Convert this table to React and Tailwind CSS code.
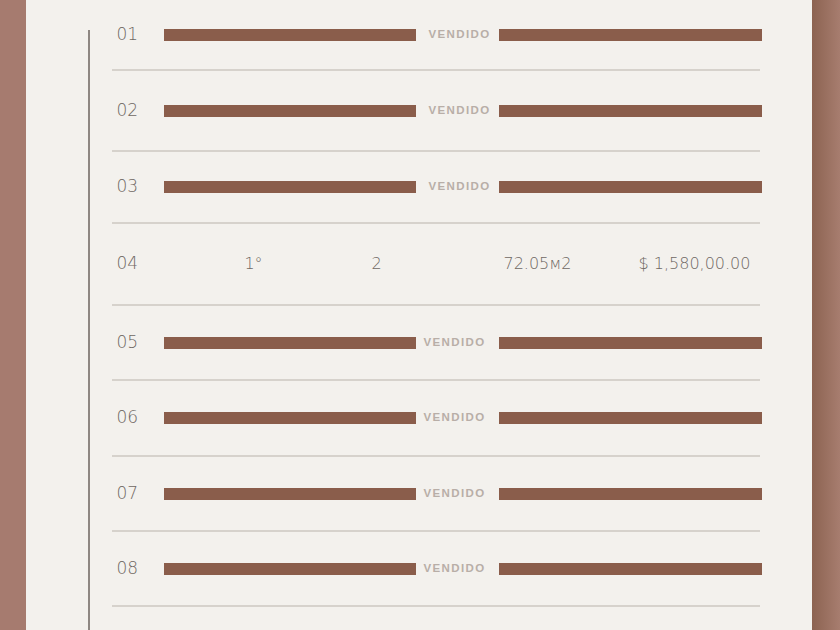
const rows = [
  { n: '01', h: 69, sold: true, shift: 'pl-[5px]' },
  { n: '02', h: 79, sold: true, shift: 'pl-[5px]' },
  { n: '03', h: 70, sold: true, shift: 'pl-[5px]' },
  { n: '04', h: 80, sold: false },
  { n: '05', h: 73, sold: true, shift: 'pr-[5px]' },
  { n: '06', h: 74, sold: true, shift: 'pr-[5px]' },
  { n: '07', h: 73, sold: true, shift: 'pr-[5px]' },
  { n: '08', h: 73, sold: true, shift: 'pr-[5px]' },
]

function Row({ row }) {
  return (
    <div className="flex flex-col">
      <div className="flex items-center" style={{ height: row.h }}>
        <div className="w-[52px] pl-[5px] text-[17px] text-[#6f6863]">{row.n}</div>
        {row.sold ? (
          <>
            <div className="w-[252px] h-[12px] bg-[#8a5d4b]" />
            <div className={`flex-1 flex justify-center ${row.shift}`}>
              <span className="font-['Liberation_Sans',sans-serif] font-bold text-[11.5px] tracking-[1.4px] text-[#b8aea7]">VENDIDO</span>
            </div>
            <div className="w-[263px] h-[12px] bg-[#8a5d4b]" />
          </>
        ) : (
          <div className="flex items-center text-[16px] text-[#6f6863] whitespace-nowrap">
            <div className="ml-[70px] w-[40px] text-center">1°</div>
            <div className="ml-[83px] w-[40px] text-center">2</div>
            <div className="ml-[91px] w-[100px] text-center">72.05м2</div>
            <div className="ml-[42px] w-[130px] text-center">$ 1,580,00.00</div>
          </div>
        )}
      </div>
      <div className="w-[648px] h-[2px] bg-[#d6d2cc]" />
    </div>
  )
}

export default function App() {
  return (
    <div className="w-[840px] h-[630px] overflow-hidden flex font-['DejaVu_Sans',sans-serif] font-light">
      <div className="w-[26px] bg-[#a67b6f]" />
      <div className="flex-1 bg-[#f3f1ed] flex">
        <div className="w-[62px]" />
        <div className="w-[1.5px] mt-[30px] bg-[#8e8782]" />
        <div className="ml-[22px] w-[650px] flex flex-col">
          {rows.map(r => <Row key={r.n} row={r} />)}
        </div>
      </div>
      <div className="w-[28px] bg-gradient-to-r from-[#8c6351] to-[#a77d6f]" />
    </div>
  )
}
